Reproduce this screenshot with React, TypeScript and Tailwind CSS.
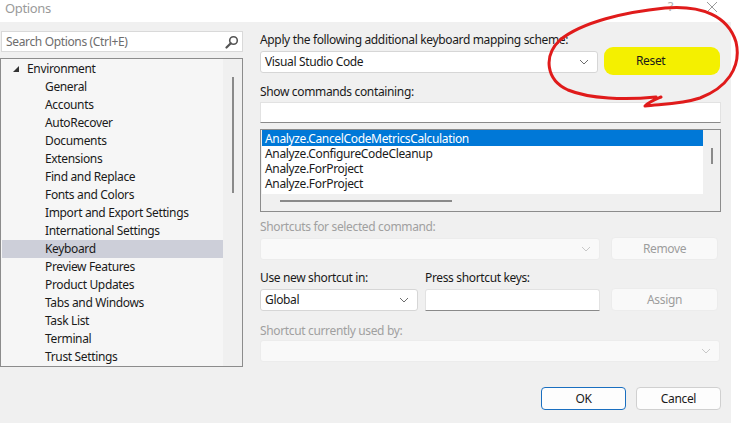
import React from 'react';

const font = { fontFamily: '"Noto Sans", "Open Sans", sans-serif' };

const treeItems = [
    'General',
    'Accounts',
    'AutoRecover',
    'Documents',
    'Extensions',
    'Find and Replace',
    'Fonts and Colors',
    'Import and Export Settings',
    'International Settings',
    'Keyboard',
    'Preview Features',
    'Product Updates',
    'Tabs and Windows',
    'Task List',
    'Terminal',
    'Trust Settings',
];

const commands = [
    'Analyze.CancelCodeMetricsCalculation',
    'Analyze.ConfigureCodeCleanup',
    'Analyze.ForProject',
    'Analyze.ForProject',
];

function Chevron({ light }: { light?: boolean }) {
    return (
        <svg width="10" height="6" viewBox="0 0 10 6" className="shrink-0">
            <path d="M1 1l4 4 4-4" fill="none" stroke={light ? '#c8c8c8' : '#6d6d6d'} strokeWidth="1" />
        </svg>
    );
}

function Combo({ value, width, disabled }: { value?: string; width: string; disabled?: boolean }) {
    return (
        <div
            className={`${width} h-[22px] flex items-center justify-between pl-[4px] pr-[8px] rounded-[3px] border ${
                disabled ? 'bg-[#f9f9f9] border-[#ececec]' : 'bg-white border-[#d6d6d6]'
            }`}
        >
            <span className="text-[12px] text-[#1a1a1a]">{value}</span>
            <Chevron light={disabled} />
        </div>
    );
}

function Btn({ label, disabled, primary }: { label: string; disabled?: boolean; primary?: boolean }) {
    return (
        <div
            className={`h-[23px] flex items-center justify-center rounded-[4px] border text-[12px] ${
                disabled
                    ? 'w-[107px] bg-[#f9f9f9] border-[#ececec] text-[#9d9d9d]'
                    : primary
                    ? 'w-[85px] bg-[#fdfdfd] border-[#1a6fc0] text-[#1a1a1a]'
                    : 'w-[85px] bg-[#fdfdfd] border-[#d0d0d0] text-[#1a1a1a]'
            }`}
        >
            {label}
        </div>
    );
}

export default function App() {
    return (
        <div
            className="relative w-[739px] h-[423px] bg-white overflow-hidden text-[#1a1a1a] tracking-[-0.35px]"
            style={font}
        >
            {/* title bar */}
            <div className="h-[22px] flex items-start justify-between pl-[5px] pr-[21px] bg-white">
                <span className="text-[13px] leading-[17px] text-[#9a9a9a]">Options</span>
                <div className="flex items-start gap-[33px]">
                    <span className="text-[13px] leading-[12px] text-[#b0b0b0]">?</span>
                    <svg width="12" height="12" viewBox="0 0 12 12" className="mt-[1px]">
                        <path d="M1 1l10 10M11 1L1 11" stroke="#9a9a9a" strokeWidth="1" />
                    </svg>
                </div>
            </div>

            <div className="w-[731px] h-[401px] bg-[#f0f0f0] flex">
                {/* left side */}
                <div className="w-[243px] shrink-0">
                    <div className="mt-[9px] ml-[1px] h-[21px] bg-white border border-[#d9d9d9] flex items-center justify-between pl-[4px] pr-[3px]">
                        <span className="text-[12px] text-[#6d6d6d]">Search Options (Ctrl+E)</span>
                        <svg width="14" height="14" viewBox="0 0 14 14">
                            <circle cx="8.5" cy="5.5" r="3.8" fill="none" stroke="#555" strokeWidth="1.6" />
                            <path d="M5.8 8.2L1.5 12.5" stroke="#555" strokeWidth="2.2" strokeLinecap="round" />
                        </svg>
                    </div>
                    <div className="mt-[6px] h-[309px] w-[243px] border border-[#8c8c8c] bg-[#f6f6f6] flex overflow-hidden">
                        <div className="w-[221px] pt-[1px] ml-[1px]">
                            <div className="h-[18px] flex items-center text-[12px]">
                                <svg width="8" height="8" viewBox="0 0 8 8" className="ml-[10px] mr-[7px]">
                                    <path d="M7 1L7 7L1 7Z" fill="#333" />
                                </svg>
                                Environment
                            </div>
                            {treeItems.map((t) => (
                                <div
                                    key={t}
                                    className={`h-[18px] flex items-center pl-[43px] text-[12px] ${
                                        t === 'Keyboard' ? 'bg-[#cdcfd9]' : ''
                                    }`}
                                >
                                    {t}
                                </div>
                            ))}
                        </div>
                        <div className="flex-1 bg-[#f0f0f0] flex justify-center">
                            <div className="w-[2px] h-[116px] mt-[18px] bg-[#8a8a8a]" />
                        </div>
                    </div>
                </div>

                {/* right side */}
                <div className="ml-[17px] w-[461px] flex flex-col text-[12px]">
                    <div className="mt-[9px] h-[17px] leading-[17px]">Apply the following additional keyboard mapping scheme:</div>
                    <div className="mt-[3px] flex items-start">
                        <Combo value="Visual Studio Code" width="w-[338px]" />
                        <div className="ml-[6px] -mt-[4px] w-[116px] h-[28px] bg-[#f4f000] rounded-[9px] flex items-center pl-[32px] text-[12px]">
                            Reset
                        </div>
                    </div>
                    <div className="mt-[8px] h-[17px] leading-[17px]">Show commands containing:</div>
                    <div className="mt-[2px] h-[21px] bg-white border border-[#e2e2e2] border-b-[#8a8a8a]" />
                    <div className="mt-[6px] h-[83px] border border-[#8c8c8c] bg-[#f0f0f0] flex flex-col">
                        <div className="flex h-[64px]">
                            <div className="w-[441px] ml-[1px] bg-white overflow-hidden">
                                {commands.map((c, i) => (
                                    <div
                                        key={i}
                                        className={`flex items-center pl-[3px] leading-[15px] ${
                                            i === 0 ? 'h-[16px] bg-[#0078d7] text-white' : 'h-[15px]'
                                        }`}
                                    >
                                        {c}
                                    </div>
                                ))}
                            </div>
                            <div className="flex-1 flex justify-center">
                                <div className="w-[2px] h-[16px] mt-[18px] bg-[#8a8a8a]" />
                            </div>
                        </div>
                        <div className="w-[172px] h-[2px] ml-[19px] mt-[6px] bg-[#8a8a8a]" />
                    </div>
                    <div className="mt-[6px] h-[17px] leading-[17px] text-[#a0a0a0]">Shortcuts for selected command:</div>
                    <div className="mt-[2px] flex items-center">
                        <Combo width="w-[340px]" disabled />
                        <div className="ml-[11px]">
                            <Btn label="Remove" disabled />
                        </div>
                    </div>
                    <div className="mt-[9px] flex">
                        <div className="w-[165px] h-[17px] leading-[17px]">Use new shortcut in:</div>
                        <div className="h-[17px] leading-[17px]">Press shortcut keys:</div>
                    </div>
                    <div className="mt-[2px] flex items-center">
                        <Combo value="Global" width="w-[158px]" />
                        <div className="ml-[7px] w-[175px] h-[22px] bg-white border border-[#e2e2e2] border-b-[#8a8a8a] rounded-t-[3px]" />
                        <div className="ml-[11px]">
                            <Btn label="Assign" disabled />
                        </div>
                    </div>
                    <div className="mt-[11px] h-[17px] leading-[17px] text-[#a0a0a0]">Shortcut currently used by:</div>
                    <div className="mt-[1px]">
                        <Combo width="w-[460px]" disabled />
                    </div>
                    <div className="mt-[25px] flex justify-end gap-[10px]">
                        <Btn label="OK" primary />
                        <Btn label="Cancel" />
                    </div>
                </div>
            </div>

            {/* hand-drawn red circle */}
            <svg className="absolute left-0 top-0 pointer-events-none" width="739" height="423" viewBox="0 0 739 423">
                <path
                    d="M656 97 C625 100 590 99 568 90 C546 80 543 56 560 40 C582 22 625 12 665 8 C702 5 728 16 736 42 C742 68 726 88 700 98 C682 104 664 104 645 106 C650 101 656 99 661 97"
                    fill="none"
                    stroke="#e01b1b"
                    strokeWidth="3"
                    strokeLinecap="round"
                    strokeLinejoin="round"
                />
            </svg>
        </div>
    );
}
